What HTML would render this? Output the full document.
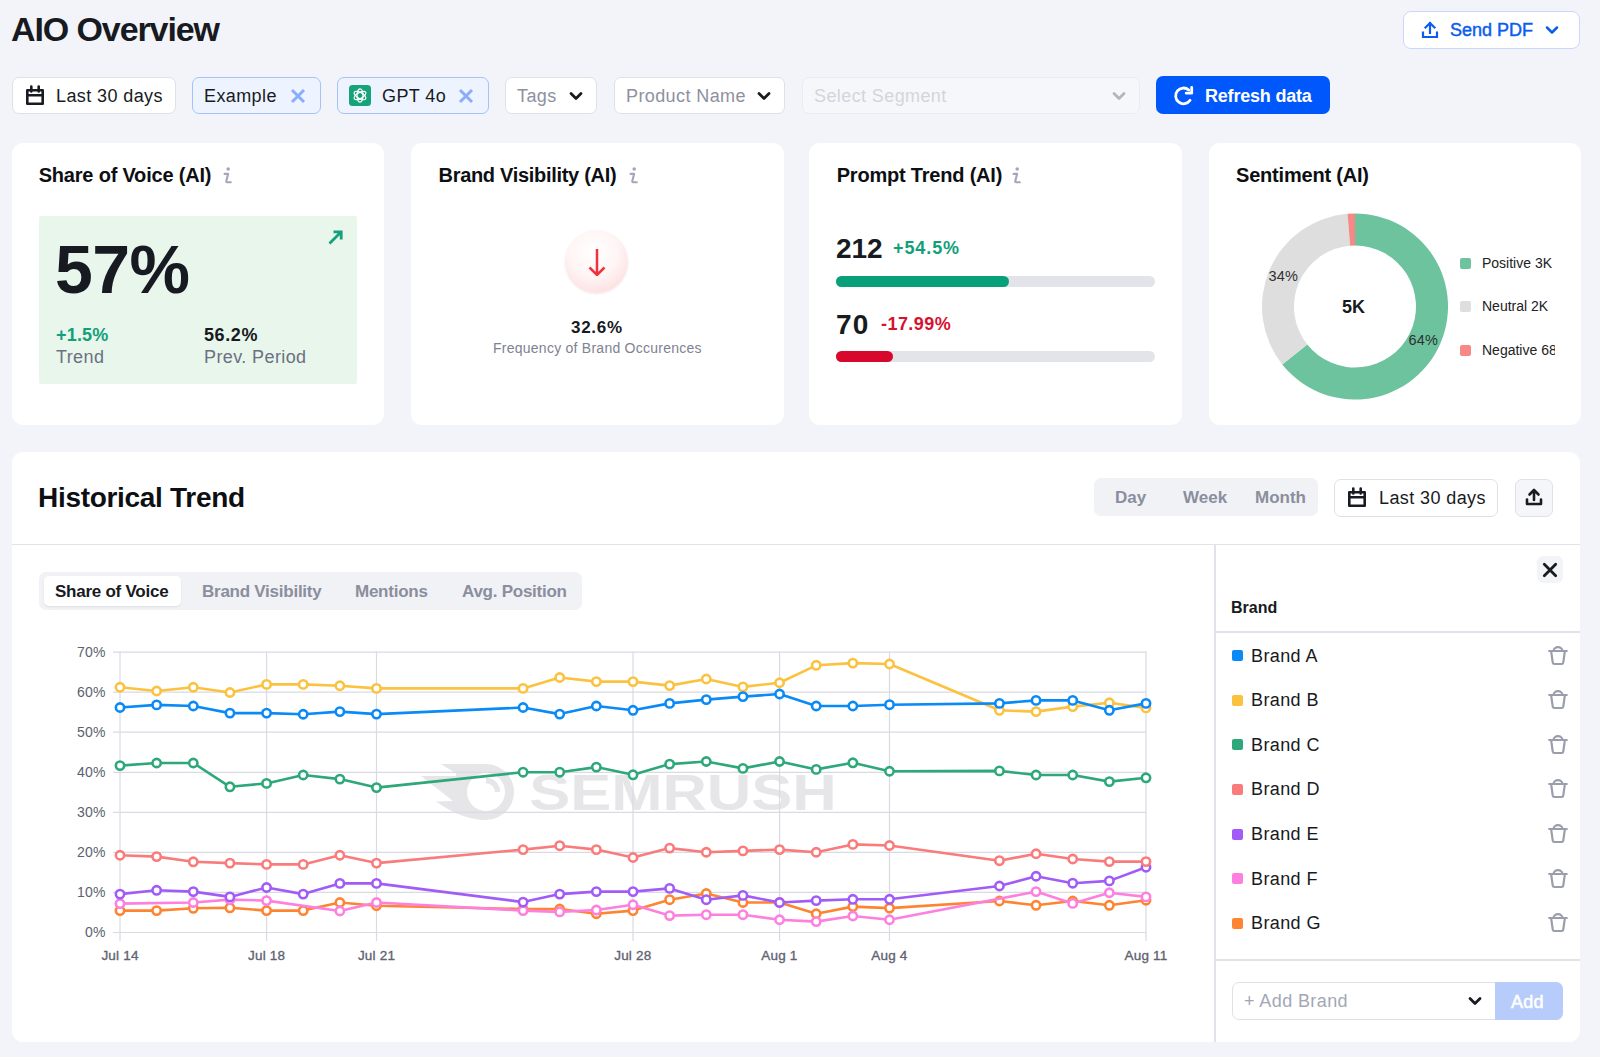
<!DOCTYPE html>
<html><head><meta charset="utf-8">
<style>
*{box-sizing:border-box;margin:0;padding:0}
html,body{width:1600px;height:1057px;overflow:hidden;background:#f2f4f9;font-family:"Liberation Sans",sans-serif;color:#181b22}
.a{position:absolute}
.t{position:absolute;white-space:nowrap;line-height:1}
.btn{position:absolute;background:#fff;border:1px solid #dfe1e8;border-radius:7px}
.card{position:absolute;background:#fff;border-radius:11px}
.b{font-weight:bold}
.gray{color:#6c7081}
</style></head><body>

<!-- Header -->
<div class="t b" id="title" style="left:11px;top:12px;font-size:34px;letter-spacing:-1.1px;color:#171a21">AIO Overview</div>

<div class="btn" style="left:1403px;top:11px;width:177px;height:38px;border:1.5px solid #c9d9fc;border-radius:8px"></div>
<svg class="a" style="left:1420px;top:20px" width="20" height="20" viewBox="0 0 20 20"><path d="M10 3v10M5.5 7.5L10 3l4.5 4.5M3 12.5v4.5h14v-4.5" fill="none" stroke="#0b5cf0" stroke-width="2.2" stroke-linecap="square"/></svg>
<div class="t" style="left:1450px;top:21px;font-size:18px;letter-spacing:0px;-webkit-text-stroke:0.45px #0b5cf0;color:#0b5cf0">Send PDF</div>
<svg class="a" style="left:1545px;top:24px" width="14" height="12" viewBox="0 0 14 12"><path d="M2 3.5l5 5 5-5" fill="none" stroke="#0b5cf0" stroke-width="2.5" stroke-linecap="round" stroke-linejoin="round"/></svg>

<!-- filters -->
<div class="btn" style="left:12px;top:77px;width:164px;height:37px"></div>
<svg class="a" style="left:24.5px;top:84.5px" width="20" height="21" viewBox="0 0 20 21"><path d="M2.3 5.2h15.4v13.5H2.3zM2.3 10.3h15.4" fill="none" stroke="#181b22" stroke-width="2.6" stroke-linejoin="round"/><path d="M6.3 1.5v5M13.7 1.5v5" fill="none" stroke="#181b22" stroke-width="2.6" stroke-linecap="round"/></svg>
<div class="t" style="left:56px;top:87px;font-size:18px;letter-spacing:0.4px">Last 30 days</div>

<div class="btn" style="left:192px;top:77px;width:129px;height:37px;background:#eef4ff;border:1.5px solid #a6c2f7"></div>
<div class="t" style="left:204px;top:87px;font-size:18px;letter-spacing:0.4px">Example</div>
<svg class="a" style="left:290px;top:88px" width="16" height="16" viewBox="0 0 16 16"><path d="M2 2l12 12M14 2L2 14" stroke="#8aaef7" stroke-width="3"/></svg>

<div class="btn" style="left:337px;top:77px;width:152px;height:37px;background:#eef4ff;border:1.5px solid #a6c2f7"></div>
<svg class="a" style="left:349px;top:85px" width="22" height="21" viewBox="0 0 22 21"><rect width="22" height="21" rx="3.5" fill="#17a37a"/><g fill="none" stroke="#fff" stroke-width="1.25" transform="translate(11 10.5)"><ellipse rx="3" ry="6.6" transform="rotate(0)"/><ellipse rx="3" ry="6.6" transform="rotate(60)"/><ellipse rx="3" ry="6.6" transform="rotate(120)"/></g></svg>
<div class="t" style="left:382px;top:87px;font-size:18px;letter-spacing:0.4px">GPT 4o</div>
<svg class="a" style="left:458px;top:88px" width="16" height="16" viewBox="0 0 16 16"><path d="M2 2l12 12M14 2L2 14" stroke="#8aaef7" stroke-width="3"/></svg>

<div class="btn" style="left:505px;top:77px;width:92px;height:37px"></div>
<div class="t" style="left:517px;top:87px;font-size:18px;letter-spacing:0.4px;color:#8d91a0">Tags</div>
<svg class="a" style="left:569px;top:90px" width="14" height="12" viewBox="0 0 14 12"><path d="M2 3.5l5 5 5-5" fill="none" stroke="#181b22" stroke-width="2.8" stroke-linecap="round" stroke-linejoin="round"/></svg>

<div class="btn" style="left:614px;top:77px;width:171px;height:37px"></div>
<div class="t" style="left:626px;top:87px;font-size:18px;letter-spacing:0.4px;color:#8d91a0">Product Name</div>
<svg class="a" style="left:757px;top:90px" width="14" height="12" viewBox="0 0 14 12"><path d="M2 3.5l5 5 5-5" fill="none" stroke="#181b22" stroke-width="2.8" stroke-linecap="round" stroke-linejoin="round"/></svg>

<div class="btn" style="left:802px;top:77px;width:338px;height:37px;background:#f6f7fb;border-color:#ebecf1"></div>
<div class="t" style="left:814px;top:87px;font-size:18px;letter-spacing:0.4px;color:#d3d5dc">Select Segment</div>
<svg class="a" style="left:1112px;top:90px" width="14" height="12" viewBox="0 0 14 12"><path d="M2 3.5l5 5 5-5" fill="none" stroke="#b3b6c0" stroke-width="2.8" stroke-linecap="round" stroke-linejoin="round"/></svg>

<div class="a" style="left:1156px;top:76px;width:174px;height:38px;background:#0058fc;border-radius:7px"></div>
<svg class="a" style="left:1172px;top:84px" width="22" height="22" viewBox="0 0 22 22"><path d="M16.8 6A7.9 7.9 0 1 0 18.1 16.3" fill="none" stroke="#fff" stroke-width="2.8" stroke-linecap="round"/><path d="M19.7 3.3V9.2H14.2" fill="none" stroke="#fff" stroke-width="2.8" stroke-linecap="round" stroke-linejoin="round"/></svg>
<div class="t b" style="left:1205px;top:87px;font-size:18px;letter-spacing:-0.2px;color:#fff">Refresh data</div>

<!-- CARDS -->
<div class="card" style="left:12px;top:143px;width:372px;height:281.5px"></div>
<div class="card" style="left:411px;top:143px;width:373px;height:281.5px"></div>
<div class="card" style="left:809px;top:143px;width:373px;height:281.5px"></div>
<div class="card" style="left:1209px;top:143px;width:372px;height:281.5px"></div>


<!-- card1 -->
<div class="t b" style="left:38.7px;top:165.3px;font-size:20px;color:#0e0f13;letter-spacing:-0.2px">Share of Voice (AI)</div>
<svg class="a" style="left:222px;top:166px" width="12" height="18" viewBox="0 0 12 18"><circle cx="6.2" cy="3" r="1.8" fill="#a3a7b7"/><path d="M2.6 7.9H6.1L4.3 15Q4 16.2 5.2 16.2H8.8" fill="none" stroke="#a3a7b7" stroke-width="2.1" stroke-linecap="round" stroke-linejoin="round"/></svg>
<div class="a" style="left:39px;top:216px;width:318px;height:168px;background:#e8f6ec;border-radius:2px"></div>
<svg class="a" style="left:326px;top:228px" width="19" height="19" viewBox="0 0 19 19"><path d="M3.5 15.5L15 4M7.5 3.8H15.2V11.5" fill="none" stroke="#15a07a" stroke-width="2.8"/></svg>
<div class="t b" style="left:55px;top:235px;font-size:68px;letter-spacing:-0.6px;color:#171a21">57%</div>
<div class="t b" style="left:56px;top:326px;font-size:18px;letter-spacing:0.2px;color:#12a07a">+1.5%</div>
<div class="t" style="left:56px;top:348px;font-size:18px;letter-spacing:0.4px;color:#6c7081">Trend</div>
<div class="t b" style="left:204px;top:326px;font-size:18px;letter-spacing:0.6px;color:#171a21">56.2%</div>
<div class="t" style="left:204px;top:348px;font-size:18px;letter-spacing:0.4px;color:#6c7081">Prev. Period</div>

<!-- card2 -->
<div class="t b" style="left:438.5px;top:165.3px;font-size:20px;color:#0e0f13;letter-spacing:-0.3px">Brand Visibility (AI)</div>
<svg class="a" style="left:628px;top:166px" width="12" height="18" viewBox="0 0 12 18"><circle cx="6.2" cy="3" r="1.8" fill="#a3a7b7"/><path d="M2.6 7.9H6.1L4.3 15Q4 16.2 5.2 16.2H8.8" fill="none" stroke="#a3a7b7" stroke-width="2.1" stroke-linecap="round" stroke-linejoin="round"/></svg>
<div class="a" style="left:565px;top:230px;width:63px;height:63px;border-radius:50%;background:radial-gradient(circle at 45% 35%, #ffffff 0%, #fff5f5 45%, #fbd3d5 100%);box-shadow:0 1px 2px rgba(200,150,150,0.25)"></div>
<svg class="a" style="left:586px;top:248px" width="22" height="28" viewBox="0 0 22 28"><path d="M11 1v26M3.5 19.5l7.5 7.5 7.5-7.5" fill="none" stroke="#f0323f" stroke-width="2.5"/></svg>
<div class="t b" style="left:571px;top:319px;font-size:17px;letter-spacing:0.7px;color:#171a21">32.6%</div>
<div class="t" style="left:493px;top:341px;font-size:14px;letter-spacing:0.25px;color:#7e8292">Frequency of Brand Occurences</div>

<!-- card3 -->
<div class="t b" style="left:836.7px;top:165.3px;font-size:20px;color:#0e0f13;letter-spacing:-0.2px">Prompt Trend (AI)</div>
<svg class="a" style="left:1011px;top:166px" width="12" height="18" viewBox="0 0 12 18"><circle cx="6.2" cy="3" r="1.8" fill="#a3a7b7"/><path d="M2.6 7.9H6.1L4.3 15Q4 16.2 5.2 16.2H8.8" fill="none" stroke="#a3a7b7" stroke-width="2.1" stroke-linecap="round" stroke-linejoin="round"/></svg>
<div class="t b" style="left:836px;top:235px;font-size:28px;letter-spacing:-0.1px;color:#171a21">212</div>
<div class="t b" style="left:893px;top:239px;font-size:18px;letter-spacing:0.9px;color:#12a07a">+54.5%</div>
<div class="a" style="left:836px;top:276px;width:319px;height:11px;background:#e3e4ea;border-radius:6px"></div>
<div class="a" style="left:836px;top:276px;width:173px;height:11px;background:#07a07a;border-radius:6px"></div>
<div class="t b" style="left:836px;top:311px;font-size:28px;letter-spacing:1.2px;color:#171a21">70</div>
<div class="t b" style="left:881px;top:315px;font-size:18px;letter-spacing:0.45px;color:#d7112f">-17.99%</div>
<div class="a" style="left:836px;top:351px;width:319px;height:11px;background:#e3e4ea;border-radius:6px"></div>
<div class="a" style="left:836px;top:351px;width:57px;height:11px;background:#d7082c;border-radius:6px"></div>

<!-- card4 -->
<div class="t b" style="left:1236px;top:165.3px;font-size:20px;color:#0e0f13;letter-spacing:-0.2px">Sentiment (AI)</div>
<svg class="a" style="left:1255px;top:206px" width="200" height="200" viewBox="0 0 200 200" id="donut"><path d="M100.00 7.50A93 93 0 1 1 27.22 158.39L52.26 138.47A61 61 0 1 0 100.00 39.50Z" fill="#6cc39e"/><path d="M27.22 158.39A93 93 0 0 1 92.54 7.80L95.11 39.70A61 61 0 0 0 52.26 138.47Z" fill="#dedede"/><path d="M92.54 7.80A93 93 0 0 1 100.00 7.50L100.00 39.50A61 61 0 0 0 95.11 39.70Z" fill="#f68886"/></svg>
<div class="t b" style="left:1342px;top:298px;font-size:18px;color:#171a21">5K</div>
<div class="t" style="left:1268.5px;top:269px;font-size:14.5px;letter-spacing:0.2px;color:#303030">34%</div>
<div class="t" style="left:1408.5px;top:333px;font-size:14.5px;letter-spacing:0.2px;color:#303030">64%</div>
<div class="a" style="left:1209px;top:143px;width:346px;height:281px;overflow:hidden">
 <div class="a" style="left:251px;top:115px;width:11px;height:11px;background:#6cc39e;border-radius:2px"></div>
 <div class="t" style="left:273px;top:113px;font-size:14px;color:#222">Positive 3K</div>
 <div class="a" style="left:251px;top:158px;width:11px;height:11px;background:#dedede;border-radius:2px"></div>
 <div class="t" style="left:273px;top:156px;font-size:14px;color:#222">Neutral 2K</div>
 <div class="a" style="left:251px;top:202px;width:11px;height:11px;background:#f68886;border-radius:2px"></div>
 <div class="t" style="left:273px;top:200px;font-size:14px;color:#222">Negative 68</div>
</div>

<!-- BIG CARD -->
<div class="card" style="left:12px;top:451.5px;width:1568px;height:590.5px"></div>


<div class="t b" style="left:38px;top:483.8px;font-size:28px;letter-spacing:-0.3px;color:#0e0f13">Historical Trend</div>
<div class="a" style="left:1094px;top:478px;width:224px;height:38px;background:#f1f2f6;border-radius:7px"></div>
<div class="t b" style="left:1115px;top:489px;font-size:17px;color:#8a8e9d">Day</div>
<div class="t b" style="left:1183px;top:489px;font-size:17px;color:#8a8e9d">Week</div>
<div class="t b" style="left:1255px;top:489px;font-size:17px;color:#8a8e9d">Month</div>
<div class="btn" style="left:1334px;top:479px;width:164px;height:38px"></div>
<svg class="a" style="left:1347px;top:486.5px" width="20" height="21" viewBox="0 0 20 21"><path d="M2.3 5.2h15.4v13.5H2.3zM2.3 10.3h15.4" fill="none" stroke="#181b22" stroke-width="2.6" stroke-linejoin="round"/><path d="M6.3 1.5v5M13.7 1.5v5" fill="none" stroke="#181b22" stroke-width="2.6" stroke-linecap="round"/></svg>
<div class="t" style="left:1379px;top:489px;font-size:18px;letter-spacing:0.4px">Last 30 days</div>
<div class="btn" style="left:1515px;top:479px;width:38px;height:38px;background:#f5f6f9"></div>
<svg class="a" style="left:1524px;top:487px" width="20" height="20" viewBox="0 0 20 20"><path d="M10 3v10M5.5 7.5L10 3l4.5 4.5M3 12.5v4.5h14v-4.5" fill="none" stroke="#181b22" stroke-width="2.6" stroke-linecap="round" stroke-linejoin="round"/></svg>
<div class="a" style="left:12px;top:543.5px;width:1568px;height:1.5px;background:#e2e3ea"></div>
<div class="a" style="left:1214px;top:544px;width:1.5px;height:498px;background:#e2e3ea"></div>

<!-- tabs -->
<div class="a" style="left:39px;top:572px;width:543px;height:38px;background:#f1f2f6;border-radius:7px"></div>
<div class="a" style="left:44px;top:576px;width:137px;height:30px;background:#fff;border-radius:5px;box-shadow:0 1px 2px rgba(0,0,0,0.08)"></div>
<div class="t b" style="left:55px;top:582.7px;font-size:17px;letter-spacing:-0.25px;color:#171a21">Share of Voice</div>
<div class="t b" style="left:202px;top:582.7px;font-size:17px;letter-spacing:-0.25px;color:#8a8e9d">Brand Visibility</div>
<div class="t b" style="left:355px;top:582.7px;font-size:17px;letter-spacing:-0.25px;color:#8a8e9d">Mentions</div>
<div class="t b" style="left:462px;top:582.7px;font-size:17px;letter-spacing:-0.25px;color:#8a8e9d">Avg. Position</div>

<!-- axis labels -->
<div class="a" style="left:40px;top:0;width:65.6px">
<div class="t" style="right:0;top:644.9px;font-size:14px;letter-spacing:0.2px;color:#5b5f6e">70%</div>
<div class="t" style="right:0;top:684.9px;font-size:14px;letter-spacing:0.2px;color:#5b5f6e">60%</div>
<div class="t" style="right:0;top:724.9px;font-size:14px;letter-spacing:0.2px;color:#5b5f6e">50%</div>
<div class="t" style="right:0;top:764.9px;font-size:14px;letter-spacing:0.2px;color:#5b5f6e">40%</div>
<div class="t" style="right:0;top:804.9px;font-size:14px;letter-spacing:0.2px;color:#5b5f6e">30%</div>
<div class="t" style="right:0;top:844.9px;font-size:14px;letter-spacing:0.2px;color:#5b5f6e">20%</div>
<div class="t" style="right:0;top:884.9px;font-size:14px;letter-spacing:0.2px;color:#5b5f6e">10%</div>
<div class="t" style="right:0;top:924.9px;font-size:14px;letter-spacing:0.2px;color:#5b5f6e">0%</div>
</div>
<div class="t" style="left:120px;top:949px;font-size:13.5px;letter-spacing:0.2px;-webkit-text-stroke:0.35px #5f6371;color:#5f6371;transform:translateX(-50%)">Jul 14</div>
<div class="t" style="left:266.6px;top:949px;font-size:13.5px;letter-spacing:0.2px;-webkit-text-stroke:0.35px #5f6371;color:#5f6371;transform:translateX(-50%)">Jul 18</div>
<div class="t" style="left:376.5px;top:949px;font-size:13.5px;letter-spacing:0.2px;-webkit-text-stroke:0.35px #5f6371;color:#5f6371;transform:translateX(-50%)">Jul 21</div>
<div class="t" style="left:632.8px;top:949px;font-size:13.5px;letter-spacing:0.2px;-webkit-text-stroke:0.35px #5f6371;color:#5f6371;transform:translateX(-50%)">Jul 28</div>
<div class="t" style="left:779.4px;top:949px;font-size:13.5px;letter-spacing:0.2px;-webkit-text-stroke:0.35px #5f6371;color:#5f6371;transform:translateX(-50%)">Aug 1</div>
<div class="t" style="left:889.4px;top:949px;font-size:13.5px;letter-spacing:0.2px;-webkit-text-stroke:0.35px #5f6371;color:#5f6371;transform:translateX(-50%)">Aug 4</div>
<div class="t" style="left:1146px;top:949px;font-size:13.5px;letter-spacing:0.2px;-webkit-text-stroke:0.35px #5f6371;color:#5f6371;transform:translateX(-50%)">Aug 11</div>

<svg class="a" style="left:0;top:0" width="1600" height="1057" viewBox="0 0 1600 1057">
<g fill="#e6e6e9"><path d="M441 764L486 764A28 28 0 0 1 486 820Q462 820 436 801.5L453 801L421 776L456 776L456 773.5Z"/><text x="529.3" y="810" font-family="Liberation Sans" font-weight="bold" font-size="50" textLength="307.3" lengthAdjust="spacingAndGlyphs">SEMRUSH</text></g><circle cx="486" cy="792" r="19" fill="#fff"/><path d="M486 780.5A11.5 11.5 0 0 1 497.5 792" fill="none" stroke="#e6e6e9" stroke-width="5.5"/>
<g stroke="#d9dae3" stroke-width="1.2" fill="none">
<path d="M113 652.10H1146.5"/>
<path d="M113 692.16H1146.5"/>
<path d="M113 732.22H1146.5"/>
<path d="M113 772.28H1146.5"/>
<path d="M113 812.34H1146.5"/>
<path d="M113 852.40H1146.5"/>
<path d="M113 892.46H1146.5"/>
<path d="M113 932.52H1146.5"/>
<path d="M120.00 651.5V941"/>
<path d="M266.57 651.5V941"/>
<path d="M376.50 651.5V941"/>
<path d="M633.00 651.5V941"/>
<path d="M779.57 651.5V941"/>
<path d="M889.50 651.5V941"/>
<path d="M1146.00 651.5V941"/>
</g>
<!--WM-->
<g><path d="M120.00 910.60 L156.64 910.60 L193.29 908.30 L229.93 907.80 L266.57 910.60 L303.21 910.60 L339.86 902.50 L376.50 905.70 L523.07 909.00 L559.71 909.00 L596.36 913.75 L633.00 910.60 L669.64 899.70 L706.29 893.50 L742.93 902.50 L779.57 902.50 L816.21 913.75 L852.86 906.60 L889.50 908.10 L999.43 901.00 L1036.07 905.30 L1072.71 901.00 L1109.36 905.30 L1146.00 900.25" fill="none" stroke="#fd8532" stroke-width="2.6" stroke-linejoin="round"/><circle cx="120.00" cy="910.60" r="4.15" fill="#fff" stroke="#fd8532" stroke-width="2.6"/><circle cx="156.64" cy="910.60" r="4.15" fill="#fff" stroke="#fd8532" stroke-width="2.6"/><circle cx="193.29" cy="908.30" r="4.15" fill="#fff" stroke="#fd8532" stroke-width="2.6"/><circle cx="229.93" cy="907.80" r="4.15" fill="#fff" stroke="#fd8532" stroke-width="2.6"/><circle cx="266.57" cy="910.60" r="4.15" fill="#fff" stroke="#fd8532" stroke-width="2.6"/><circle cx="303.21" cy="910.60" r="4.15" fill="#fff" stroke="#fd8532" stroke-width="2.6"/><circle cx="339.86" cy="902.50" r="4.15" fill="#fff" stroke="#fd8532" stroke-width="2.6"/><circle cx="376.50" cy="905.70" r="4.15" fill="#fff" stroke="#fd8532" stroke-width="2.6"/><circle cx="523.07" cy="909.00" r="4.15" fill="#fff" stroke="#fd8532" stroke-width="2.6"/><circle cx="559.71" cy="909.00" r="4.15" fill="#fff" stroke="#fd8532" stroke-width="2.6"/><circle cx="596.36" cy="913.75" r="4.15" fill="#fff" stroke="#fd8532" stroke-width="2.6"/><circle cx="633.00" cy="910.60" r="4.15" fill="#fff" stroke="#fd8532" stroke-width="2.6"/><circle cx="669.64" cy="899.70" r="4.15" fill="#fff" stroke="#fd8532" stroke-width="2.6"/><circle cx="706.29" cy="893.50" r="4.15" fill="#fff" stroke="#fd8532" stroke-width="2.6"/><circle cx="742.93" cy="902.50" r="4.15" fill="#fff" stroke="#fd8532" stroke-width="2.6"/><circle cx="779.57" cy="902.50" r="4.15" fill="#fff" stroke="#fd8532" stroke-width="2.6"/><circle cx="816.21" cy="913.75" r="4.15" fill="#fff" stroke="#fd8532" stroke-width="2.6"/><circle cx="852.86" cy="906.60" r="4.15" fill="#fff" stroke="#fd8532" stroke-width="2.6"/><circle cx="889.50" cy="908.10" r="4.15" fill="#fff" stroke="#fd8532" stroke-width="2.6"/><circle cx="999.43" cy="901.00" r="4.15" fill="#fff" stroke="#fd8532" stroke-width="2.6"/><circle cx="1036.07" cy="905.30" r="4.15" fill="#fff" stroke="#fd8532" stroke-width="2.6"/><circle cx="1072.71" cy="901.00" r="4.15" fill="#fff" stroke="#fd8532" stroke-width="2.6"/><circle cx="1109.36" cy="905.30" r="4.15" fill="#fff" stroke="#fd8532" stroke-width="2.6"/><circle cx="1146.00" cy="900.25" r="4.15" fill="#fff" stroke="#fd8532" stroke-width="2.6"/></g>
<g><path d="M120.00 903.60 L193.29 902.50 L229.93 899.60 L266.57 900.60 L339.86 911.00 L376.50 902.50 L523.07 910.60 L559.71 911.90 L596.36 910.00 L633.00 904.75 L669.64 915.60 L706.29 914.70 L742.93 914.70 L779.57 919.75 L816.21 921.60 L852.86 916.00 L889.50 919.75 L1036.07 891.60 L1072.71 903.40 L1109.36 892.75 L1146.00 896.90" fill="none" stroke="#fd80de" stroke-width="2.6" stroke-linejoin="round"/><circle cx="120.00" cy="903.60" r="4.15" fill="#fff" stroke="#fd80de" stroke-width="2.6"/><circle cx="193.29" cy="902.50" r="4.15" fill="#fff" stroke="#fd80de" stroke-width="2.6"/><circle cx="229.93" cy="899.60" r="4.15" fill="#fff" stroke="#fd80de" stroke-width="2.6"/><circle cx="266.57" cy="900.60" r="4.15" fill="#fff" stroke="#fd80de" stroke-width="2.6"/><circle cx="339.86" cy="911.00" r="4.15" fill="#fff" stroke="#fd80de" stroke-width="2.6"/><circle cx="376.50" cy="902.50" r="4.15" fill="#fff" stroke="#fd80de" stroke-width="2.6"/><circle cx="523.07" cy="910.60" r="4.15" fill="#fff" stroke="#fd80de" stroke-width="2.6"/><circle cx="559.71" cy="911.90" r="4.15" fill="#fff" stroke="#fd80de" stroke-width="2.6"/><circle cx="596.36" cy="910.00" r="4.15" fill="#fff" stroke="#fd80de" stroke-width="2.6"/><circle cx="633.00" cy="904.75" r="4.15" fill="#fff" stroke="#fd80de" stroke-width="2.6"/><circle cx="669.64" cy="915.60" r="4.15" fill="#fff" stroke="#fd80de" stroke-width="2.6"/><circle cx="706.29" cy="914.70" r="4.15" fill="#fff" stroke="#fd80de" stroke-width="2.6"/><circle cx="742.93" cy="914.70" r="4.15" fill="#fff" stroke="#fd80de" stroke-width="2.6"/><circle cx="779.57" cy="919.75" r="4.15" fill="#fff" stroke="#fd80de" stroke-width="2.6"/><circle cx="816.21" cy="921.60" r="4.15" fill="#fff" stroke="#fd80de" stroke-width="2.6"/><circle cx="852.86" cy="916.00" r="4.15" fill="#fff" stroke="#fd80de" stroke-width="2.6"/><circle cx="889.50" cy="919.75" r="4.15" fill="#fff" stroke="#fd80de" stroke-width="2.6"/><circle cx="1036.07" cy="891.60" r="4.15" fill="#fff" stroke="#fd80de" stroke-width="2.6"/><circle cx="1072.71" cy="903.40" r="4.15" fill="#fff" stroke="#fd80de" stroke-width="2.6"/><circle cx="1109.36" cy="892.75" r="4.15" fill="#fff" stroke="#fd80de" stroke-width="2.6"/><circle cx="1146.00" cy="896.90" r="4.15" fill="#fff" stroke="#fd80de" stroke-width="2.6"/></g>
<g><path d="M120.00 894.10 L156.64 890.30 L193.29 891.60 L229.93 896.90 L266.57 887.50 L303.21 894.10 L339.86 883.40 L376.50 883.40 L523.07 902.10 L559.71 894.10 L596.36 891.60 L633.00 891.60 L669.64 888.40 L706.29 899.70 L742.93 895.40 L779.57 902.50 L816.21 900.60 L852.86 899.30 L889.50 899.30 L999.43 886.00 L1036.07 876.25 L1072.71 883.20 L1109.36 880.90 L1146.00 867.25" fill="none" stroke="#a15cf7" stroke-width="2.6" stroke-linejoin="round"/><circle cx="120.00" cy="894.10" r="4.15" fill="#fff" stroke="#a15cf7" stroke-width="2.6"/><circle cx="156.64" cy="890.30" r="4.15" fill="#fff" stroke="#a15cf7" stroke-width="2.6"/><circle cx="193.29" cy="891.60" r="4.15" fill="#fff" stroke="#a15cf7" stroke-width="2.6"/><circle cx="229.93" cy="896.90" r="4.15" fill="#fff" stroke="#a15cf7" stroke-width="2.6"/><circle cx="266.57" cy="887.50" r="4.15" fill="#fff" stroke="#a15cf7" stroke-width="2.6"/><circle cx="303.21" cy="894.10" r="4.15" fill="#fff" stroke="#a15cf7" stroke-width="2.6"/><circle cx="339.86" cy="883.40" r="4.15" fill="#fff" stroke="#a15cf7" stroke-width="2.6"/><circle cx="376.50" cy="883.40" r="4.15" fill="#fff" stroke="#a15cf7" stroke-width="2.6"/><circle cx="523.07" cy="902.10" r="4.15" fill="#fff" stroke="#a15cf7" stroke-width="2.6"/><circle cx="559.71" cy="894.10" r="4.15" fill="#fff" stroke="#a15cf7" stroke-width="2.6"/><circle cx="596.36" cy="891.60" r="4.15" fill="#fff" stroke="#a15cf7" stroke-width="2.6"/><circle cx="633.00" cy="891.60" r="4.15" fill="#fff" stroke="#a15cf7" stroke-width="2.6"/><circle cx="669.64" cy="888.40" r="4.15" fill="#fff" stroke="#a15cf7" stroke-width="2.6"/><circle cx="706.29" cy="899.70" r="4.15" fill="#fff" stroke="#a15cf7" stroke-width="2.6"/><circle cx="742.93" cy="895.40" r="4.15" fill="#fff" stroke="#a15cf7" stroke-width="2.6"/><circle cx="779.57" cy="902.50" r="4.15" fill="#fff" stroke="#a15cf7" stroke-width="2.6"/><circle cx="816.21" cy="900.60" r="4.15" fill="#fff" stroke="#a15cf7" stroke-width="2.6"/><circle cx="852.86" cy="899.30" r="4.15" fill="#fff" stroke="#a15cf7" stroke-width="2.6"/><circle cx="889.50" cy="899.30" r="4.15" fill="#fff" stroke="#a15cf7" stroke-width="2.6"/><circle cx="999.43" cy="886.00" r="4.15" fill="#fff" stroke="#a15cf7" stroke-width="2.6"/><circle cx="1036.07" cy="876.25" r="4.15" fill="#fff" stroke="#a15cf7" stroke-width="2.6"/><circle cx="1072.71" cy="883.20" r="4.15" fill="#fff" stroke="#a15cf7" stroke-width="2.6"/><circle cx="1109.36" cy="880.90" r="4.15" fill="#fff" stroke="#a15cf7" stroke-width="2.6"/><circle cx="1146.00" cy="867.25" r="4.15" fill="#fff" stroke="#a15cf7" stroke-width="2.6"/></g>
<g><path d="M120.00 855.25 L156.64 856.60 L193.29 861.80 L229.93 863.10 L266.57 864.40 L303.21 864.40 L339.86 855.25 L376.50 863.10 L523.07 849.60 L559.71 845.70 L596.36 849.60 L633.00 857.50 L669.64 848.10 L706.29 852.25 L742.93 850.90 L779.57 849.60 L816.21 852.25 L852.86 844.40 L889.50 845.50 L999.43 860.70 L1036.07 853.75 L1072.71 859.00 L1109.36 861.60 L1146.00 861.60" fill="none" stroke="#f97b7b" stroke-width="2.6" stroke-linejoin="round"/><circle cx="120.00" cy="855.25" r="4.15" fill="#fff" stroke="#f97b7b" stroke-width="2.6"/><circle cx="156.64" cy="856.60" r="4.15" fill="#fff" stroke="#f97b7b" stroke-width="2.6"/><circle cx="193.29" cy="861.80" r="4.15" fill="#fff" stroke="#f97b7b" stroke-width="2.6"/><circle cx="229.93" cy="863.10" r="4.15" fill="#fff" stroke="#f97b7b" stroke-width="2.6"/><circle cx="266.57" cy="864.40" r="4.15" fill="#fff" stroke="#f97b7b" stroke-width="2.6"/><circle cx="303.21" cy="864.40" r="4.15" fill="#fff" stroke="#f97b7b" stroke-width="2.6"/><circle cx="339.86" cy="855.25" r="4.15" fill="#fff" stroke="#f97b7b" stroke-width="2.6"/><circle cx="376.50" cy="863.10" r="4.15" fill="#fff" stroke="#f97b7b" stroke-width="2.6"/><circle cx="523.07" cy="849.60" r="4.15" fill="#fff" stroke="#f97b7b" stroke-width="2.6"/><circle cx="559.71" cy="845.70" r="4.15" fill="#fff" stroke="#f97b7b" stroke-width="2.6"/><circle cx="596.36" cy="849.60" r="4.15" fill="#fff" stroke="#f97b7b" stroke-width="2.6"/><circle cx="633.00" cy="857.50" r="4.15" fill="#fff" stroke="#f97b7b" stroke-width="2.6"/><circle cx="669.64" cy="848.10" r="4.15" fill="#fff" stroke="#f97b7b" stroke-width="2.6"/><circle cx="706.29" cy="852.25" r="4.15" fill="#fff" stroke="#f97b7b" stroke-width="2.6"/><circle cx="742.93" cy="850.90" r="4.15" fill="#fff" stroke="#f97b7b" stroke-width="2.6"/><circle cx="779.57" cy="849.60" r="4.15" fill="#fff" stroke="#f97b7b" stroke-width="2.6"/><circle cx="816.21" cy="852.25" r="4.15" fill="#fff" stroke="#f97b7b" stroke-width="2.6"/><circle cx="852.86" cy="844.40" r="4.15" fill="#fff" stroke="#f97b7b" stroke-width="2.6"/><circle cx="889.50" cy="845.50" r="4.15" fill="#fff" stroke="#f97b7b" stroke-width="2.6"/><circle cx="999.43" cy="860.70" r="4.15" fill="#fff" stroke="#f97b7b" stroke-width="2.6"/><circle cx="1036.07" cy="853.75" r="4.15" fill="#fff" stroke="#f97b7b" stroke-width="2.6"/><circle cx="1072.71" cy="859.00" r="4.15" fill="#fff" stroke="#f97b7b" stroke-width="2.6"/><circle cx="1109.36" cy="861.60" r="4.15" fill="#fff" stroke="#f97b7b" stroke-width="2.6"/><circle cx="1146.00" cy="861.60" r="4.15" fill="#fff" stroke="#f97b7b" stroke-width="2.6"/></g>
<g><path d="M120.00 765.60 L156.64 763.00 L193.29 763.00 L229.93 786.80 L266.57 783.40 L303.21 775.00 L339.86 779.10 L376.50 787.60 L523.07 772.20 L559.71 772.20 L596.36 767.10 L633.00 774.80 L669.64 764.10 L706.29 761.50 L742.93 768.40 L779.57 761.50 L816.21 769.40 L852.86 762.80 L889.50 771.25 L999.43 770.90 L1036.07 775.00 L1072.71 775.00 L1109.36 781.60 L1146.00 777.80" fill="none" stroke="#2ea87a" stroke-width="2.6" stroke-linejoin="round"/><circle cx="120.00" cy="765.60" r="4.15" fill="#fff" stroke="#2ea87a" stroke-width="2.6"/><circle cx="156.64" cy="763.00" r="4.15" fill="#fff" stroke="#2ea87a" stroke-width="2.6"/><circle cx="193.29" cy="763.00" r="4.15" fill="#fff" stroke="#2ea87a" stroke-width="2.6"/><circle cx="229.93" cy="786.80" r="4.15" fill="#fff" stroke="#2ea87a" stroke-width="2.6"/><circle cx="266.57" cy="783.40" r="4.15" fill="#fff" stroke="#2ea87a" stroke-width="2.6"/><circle cx="303.21" cy="775.00" r="4.15" fill="#fff" stroke="#2ea87a" stroke-width="2.6"/><circle cx="339.86" cy="779.10" r="4.15" fill="#fff" stroke="#2ea87a" stroke-width="2.6"/><circle cx="376.50" cy="787.60" r="4.15" fill="#fff" stroke="#2ea87a" stroke-width="2.6"/><circle cx="523.07" cy="772.20" r="4.15" fill="#fff" stroke="#2ea87a" stroke-width="2.6"/><circle cx="559.71" cy="772.20" r="4.15" fill="#fff" stroke="#2ea87a" stroke-width="2.6"/><circle cx="596.36" cy="767.10" r="4.15" fill="#fff" stroke="#2ea87a" stroke-width="2.6"/><circle cx="633.00" cy="774.80" r="4.15" fill="#fff" stroke="#2ea87a" stroke-width="2.6"/><circle cx="669.64" cy="764.10" r="4.15" fill="#fff" stroke="#2ea87a" stroke-width="2.6"/><circle cx="706.29" cy="761.50" r="4.15" fill="#fff" stroke="#2ea87a" stroke-width="2.6"/><circle cx="742.93" cy="768.40" r="4.15" fill="#fff" stroke="#2ea87a" stroke-width="2.6"/><circle cx="779.57" cy="761.50" r="4.15" fill="#fff" stroke="#2ea87a" stroke-width="2.6"/><circle cx="816.21" cy="769.40" r="4.15" fill="#fff" stroke="#2ea87a" stroke-width="2.6"/><circle cx="852.86" cy="762.80" r="4.15" fill="#fff" stroke="#2ea87a" stroke-width="2.6"/><circle cx="889.50" cy="771.25" r="4.15" fill="#fff" stroke="#2ea87a" stroke-width="2.6"/><circle cx="999.43" cy="770.90" r="4.15" fill="#fff" stroke="#2ea87a" stroke-width="2.6"/><circle cx="1036.07" cy="775.00" r="4.15" fill="#fff" stroke="#2ea87a" stroke-width="2.6"/><circle cx="1072.71" cy="775.00" r="4.15" fill="#fff" stroke="#2ea87a" stroke-width="2.6"/><circle cx="1109.36" cy="781.60" r="4.15" fill="#fff" stroke="#2ea87a" stroke-width="2.6"/><circle cx="1146.00" cy="777.80" r="4.15" fill="#fff" stroke="#2ea87a" stroke-width="2.6"/></g>
<g><path d="M120.00 687.25 L156.64 691.00 L193.29 687.25 L229.93 692.50 L266.57 684.40 L303.21 684.40 L339.86 685.75 L376.50 688.40 L523.07 688.40 L559.71 677.50 L596.36 681.60 L633.00 681.60 L669.64 685.60 L706.29 679.00 L742.93 686.90 L779.57 682.75 L816.21 665.30 L852.86 663.10 L889.50 664.00 L999.43 710.30 L1036.07 711.60 L1072.71 706.60 L1109.36 702.80 L1146.00 707.90" fill="none" stroke="#fbc23f" stroke-width="2.6" stroke-linejoin="round"/><circle cx="120.00" cy="687.25" r="4.15" fill="#fff" stroke="#fbc23f" stroke-width="2.6"/><circle cx="156.64" cy="691.00" r="4.15" fill="#fff" stroke="#fbc23f" stroke-width="2.6"/><circle cx="193.29" cy="687.25" r="4.15" fill="#fff" stroke="#fbc23f" stroke-width="2.6"/><circle cx="229.93" cy="692.50" r="4.15" fill="#fff" stroke="#fbc23f" stroke-width="2.6"/><circle cx="266.57" cy="684.40" r="4.15" fill="#fff" stroke="#fbc23f" stroke-width="2.6"/><circle cx="303.21" cy="684.40" r="4.15" fill="#fff" stroke="#fbc23f" stroke-width="2.6"/><circle cx="339.86" cy="685.75" r="4.15" fill="#fff" stroke="#fbc23f" stroke-width="2.6"/><circle cx="376.50" cy="688.40" r="4.15" fill="#fff" stroke="#fbc23f" stroke-width="2.6"/><circle cx="523.07" cy="688.40" r="4.15" fill="#fff" stroke="#fbc23f" stroke-width="2.6"/><circle cx="559.71" cy="677.50" r="4.15" fill="#fff" stroke="#fbc23f" stroke-width="2.6"/><circle cx="596.36" cy="681.60" r="4.15" fill="#fff" stroke="#fbc23f" stroke-width="2.6"/><circle cx="633.00" cy="681.60" r="4.15" fill="#fff" stroke="#fbc23f" stroke-width="2.6"/><circle cx="669.64" cy="685.60" r="4.15" fill="#fff" stroke="#fbc23f" stroke-width="2.6"/><circle cx="706.29" cy="679.00" r="4.15" fill="#fff" stroke="#fbc23f" stroke-width="2.6"/><circle cx="742.93" cy="686.90" r="4.15" fill="#fff" stroke="#fbc23f" stroke-width="2.6"/><circle cx="779.57" cy="682.75" r="4.15" fill="#fff" stroke="#fbc23f" stroke-width="2.6"/><circle cx="816.21" cy="665.30" r="4.15" fill="#fff" stroke="#fbc23f" stroke-width="2.6"/><circle cx="852.86" cy="663.10" r="4.15" fill="#fff" stroke="#fbc23f" stroke-width="2.6"/><circle cx="889.50" cy="664.00" r="4.15" fill="#fff" stroke="#fbc23f" stroke-width="2.6"/><circle cx="999.43" cy="710.30" r="4.15" fill="#fff" stroke="#fbc23f" stroke-width="2.6"/><circle cx="1036.07" cy="711.60" r="4.15" fill="#fff" stroke="#fbc23f" stroke-width="2.6"/><circle cx="1072.71" cy="706.60" r="4.15" fill="#fff" stroke="#fbc23f" stroke-width="2.6"/><circle cx="1109.36" cy="702.80" r="4.15" fill="#fff" stroke="#fbc23f" stroke-width="2.6"/><circle cx="1146.00" cy="707.90" r="4.15" fill="#fff" stroke="#fbc23f" stroke-width="2.6"/></g>
<g><path d="M120.00 707.50 L156.64 704.90 L193.29 706.00 L229.93 713.10 L266.57 713.10 L303.21 714.25 L339.86 711.60 L376.50 714.10 L523.07 707.50 L559.71 714.10 L596.36 706.00 L633.00 710.30 L669.64 703.40 L706.29 699.60 L742.93 696.60 L779.57 694.00 L816.21 706.00 L852.86 706.00 L889.50 704.70 L999.43 703.40 L1036.07 700.40 L1072.71 700.40 L1109.36 710.30 L1146.00 703.40" fill="none" stroke="#0a8af6" stroke-width="2.6" stroke-linejoin="round"/><circle cx="120.00" cy="707.50" r="4.15" fill="#fff" stroke="#0a8af6" stroke-width="2.6"/><circle cx="156.64" cy="704.90" r="4.15" fill="#fff" stroke="#0a8af6" stroke-width="2.6"/><circle cx="193.29" cy="706.00" r="4.15" fill="#fff" stroke="#0a8af6" stroke-width="2.6"/><circle cx="229.93" cy="713.10" r="4.15" fill="#fff" stroke="#0a8af6" stroke-width="2.6"/><circle cx="266.57" cy="713.10" r="4.15" fill="#fff" stroke="#0a8af6" stroke-width="2.6"/><circle cx="303.21" cy="714.25" r="4.15" fill="#fff" stroke="#0a8af6" stroke-width="2.6"/><circle cx="339.86" cy="711.60" r="4.15" fill="#fff" stroke="#0a8af6" stroke-width="2.6"/><circle cx="376.50" cy="714.10" r="4.15" fill="#fff" stroke="#0a8af6" stroke-width="2.6"/><circle cx="523.07" cy="707.50" r="4.15" fill="#fff" stroke="#0a8af6" stroke-width="2.6"/><circle cx="559.71" cy="714.10" r="4.15" fill="#fff" stroke="#0a8af6" stroke-width="2.6"/><circle cx="596.36" cy="706.00" r="4.15" fill="#fff" stroke="#0a8af6" stroke-width="2.6"/><circle cx="633.00" cy="710.30" r="4.15" fill="#fff" stroke="#0a8af6" stroke-width="2.6"/><circle cx="669.64" cy="703.40" r="4.15" fill="#fff" stroke="#0a8af6" stroke-width="2.6"/><circle cx="706.29" cy="699.60" r="4.15" fill="#fff" stroke="#0a8af6" stroke-width="2.6"/><circle cx="742.93" cy="696.60" r="4.15" fill="#fff" stroke="#0a8af6" stroke-width="2.6"/><circle cx="779.57" cy="694.00" r="4.15" fill="#fff" stroke="#0a8af6" stroke-width="2.6"/><circle cx="816.21" cy="706.00" r="4.15" fill="#fff" stroke="#0a8af6" stroke-width="2.6"/><circle cx="852.86" cy="706.00" r="4.15" fill="#fff" stroke="#0a8af6" stroke-width="2.6"/><circle cx="889.50" cy="704.70" r="4.15" fill="#fff" stroke="#0a8af6" stroke-width="2.6"/><circle cx="999.43" cy="703.40" r="4.15" fill="#fff" stroke="#0a8af6" stroke-width="2.6"/><circle cx="1036.07" cy="700.40" r="4.15" fill="#fff" stroke="#0a8af6" stroke-width="2.6"/><circle cx="1072.71" cy="700.40" r="4.15" fill="#fff" stroke="#0a8af6" stroke-width="2.6"/><circle cx="1109.36" cy="710.30" r="4.15" fill="#fff" stroke="#0a8af6" stroke-width="2.6"/><circle cx="1146.00" cy="703.40" r="4.15" fill="#fff" stroke="#0a8af6" stroke-width="2.6"/></g>
</svg>

<!-- brand panel -->
<div class="a" style="left:1537px;top:556px;width:26px;height:27px;background:#f3f4f7;border-radius:6px"></div>
<svg class="a" style="left:1542px;top:562px" width="16" height="16" viewBox="0 0 16 16"><path d="M2.3 2.3l11.4 11.4M13.7 2.3L2.3 13.7" stroke="#181b22" stroke-width="2.8" stroke-linecap="round"/></svg>
<div class="t b" style="left:1231px;top:600px;font-size:16px;color:#171a21">Brand</div>
<div class="a" style="left:1215px;top:631px;width:365px;height:1.5px;background:#e2e3ea"></div>
<div class="a" style="left:1232px;top:650.2px;width:11px;height:11px;background:#0a8af6;border-radius:2px"></div>
<div class="t" style="left:1251px;top:646.5px;font-size:18px;letter-spacing:0.4px;color:#171a21">Brand A</div>
<svg class="a" style="left:1548px;top:645.5px" width="20" height="20" viewBox="0 0 20 20"><path d="M1.2 5H18.8M5.6 5A4.4 3.8 0 0 1 14.4 5M3.2 5.6L4.7 16.4Q4.9 18 6.5 18H13.5Q15.1 18 15.3 16.4L16.8 5.6" fill="none" stroke="#9a9eac" stroke-width="2.2" stroke-linecap="round"/></svg>
<div class="a" style="left:1232px;top:694.8px;width:11px;height:11px;background:#fbc23f;border-radius:2px"></div>
<div class="t" style="left:1251px;top:691.1px;font-size:18px;letter-spacing:0.4px;color:#171a21">Brand B</div>
<svg class="a" style="left:1548px;top:690.1px" width="20" height="20" viewBox="0 0 20 20"><path d="M1.2 5H18.8M5.6 5A4.4 3.8 0 0 1 14.4 5M3.2 5.6L4.7 16.4Q4.9 18 6.5 18H13.5Q15.1 18 15.3 16.4L16.8 5.6" fill="none" stroke="#9a9eac" stroke-width="2.2" stroke-linecap="round"/></svg>
<div class="a" style="left:1232px;top:739.4px;width:11px;height:11px;background:#2ea87a;border-radius:2px"></div>
<div class="t" style="left:1251px;top:735.7px;font-size:18px;letter-spacing:0.4px;color:#171a21">Brand C</div>
<svg class="a" style="left:1548px;top:734.7px" width="20" height="20" viewBox="0 0 20 20"><path d="M1.2 5H18.8M5.6 5A4.4 3.8 0 0 1 14.4 5M3.2 5.6L4.7 16.4Q4.9 18 6.5 18H13.5Q15.1 18 15.3 16.4L16.8 5.6" fill="none" stroke="#9a9eac" stroke-width="2.2" stroke-linecap="round"/></svg>
<div class="a" style="left:1232px;top:784.0px;width:11px;height:11px;background:#f97b7b;border-radius:2px"></div>
<div class="t" style="left:1251px;top:780.3px;font-size:18px;letter-spacing:0.4px;color:#171a21">Brand D</div>
<svg class="a" style="left:1548px;top:779.3px" width="20" height="20" viewBox="0 0 20 20"><path d="M1.2 5H18.8M5.6 5A4.4 3.8 0 0 1 14.4 5M3.2 5.6L4.7 16.4Q4.9 18 6.5 18H13.5Q15.1 18 15.3 16.4L16.8 5.6" fill="none" stroke="#9a9eac" stroke-width="2.2" stroke-linecap="round"/></svg>
<div class="a" style="left:1232px;top:828.6px;width:11px;height:11px;background:#a15cf7;border-radius:2px"></div>
<div class="t" style="left:1251px;top:824.9px;font-size:18px;letter-spacing:0.4px;color:#171a21">Brand E</div>
<svg class="a" style="left:1548px;top:823.9px" width="20" height="20" viewBox="0 0 20 20"><path d="M1.2 5H18.8M5.6 5A4.4 3.8 0 0 1 14.4 5M3.2 5.6L4.7 16.4Q4.9 18 6.5 18H13.5Q15.1 18 15.3 16.4L16.8 5.6" fill="none" stroke="#9a9eac" stroke-width="2.2" stroke-linecap="round"/></svg>
<div class="a" style="left:1232px;top:873.2px;width:11px;height:11px;background:#fd80de;border-radius:2px"></div>
<div class="t" style="left:1251px;top:869.5px;font-size:18px;letter-spacing:0.4px;color:#171a21">Brand F</div>
<svg class="a" style="left:1548px;top:868.5px" width="20" height="20" viewBox="0 0 20 20"><path d="M1.2 5H18.8M5.6 5A4.4 3.8 0 0 1 14.4 5M3.2 5.6L4.7 16.4Q4.9 18 6.5 18H13.5Q15.1 18 15.3 16.4L16.8 5.6" fill="none" stroke="#9a9eac" stroke-width="2.2" stroke-linecap="round"/></svg>
<div class="a" style="left:1232px;top:917.8px;width:11px;height:11px;background:#fd8532;border-radius:2px"></div>
<div class="t" style="left:1251px;top:914.1px;font-size:18px;letter-spacing:0.4px;color:#171a21">Brand G</div>
<svg class="a" style="left:1548px;top:913.1px" width="20" height="20" viewBox="0 0 20 20"><path d="M1.2 5H18.8M5.6 5A4.4 3.8 0 0 1 14.4 5M3.2 5.6L4.7 16.4Q4.9 18 6.5 18H13.5Q15.1 18 15.3 16.4L16.8 5.6" fill="none" stroke="#9a9eac" stroke-width="2.2" stroke-linecap="round"/></svg>

<div class="a" style="left:1215px;top:959px;width:365px;height:1.5px;background:#e2e3ea"></div>
<div class="btn" style="left:1232px;top:982px;width:331px;height:38px;border-radius:7px"></div>
<div class="a" style="left:1495px;top:982px;width:68px;height:38px;background:#b7ccfb;border-radius:0 7px 7px 0"></div>
<div class="t" style="left:1244px;top:992px;font-size:18px;letter-spacing:0.4px;color:#a3a7b5">+ Add Brand</div>
<svg class="a" style="left:1468px;top:995px" width="14" height="12" viewBox="0 0 14 12"><path d="M2 3.5l5 5 5-5" fill="none" stroke="#181b22" stroke-width="2.8" stroke-linecap="round" stroke-linejoin="round"/></svg>
<div class="t" style="left:1511px;top:992.5px;font-size:18px;letter-spacing:0.3px;-webkit-text-stroke:0.5px #fff;color:#fff">Add</div>

</body></html>
